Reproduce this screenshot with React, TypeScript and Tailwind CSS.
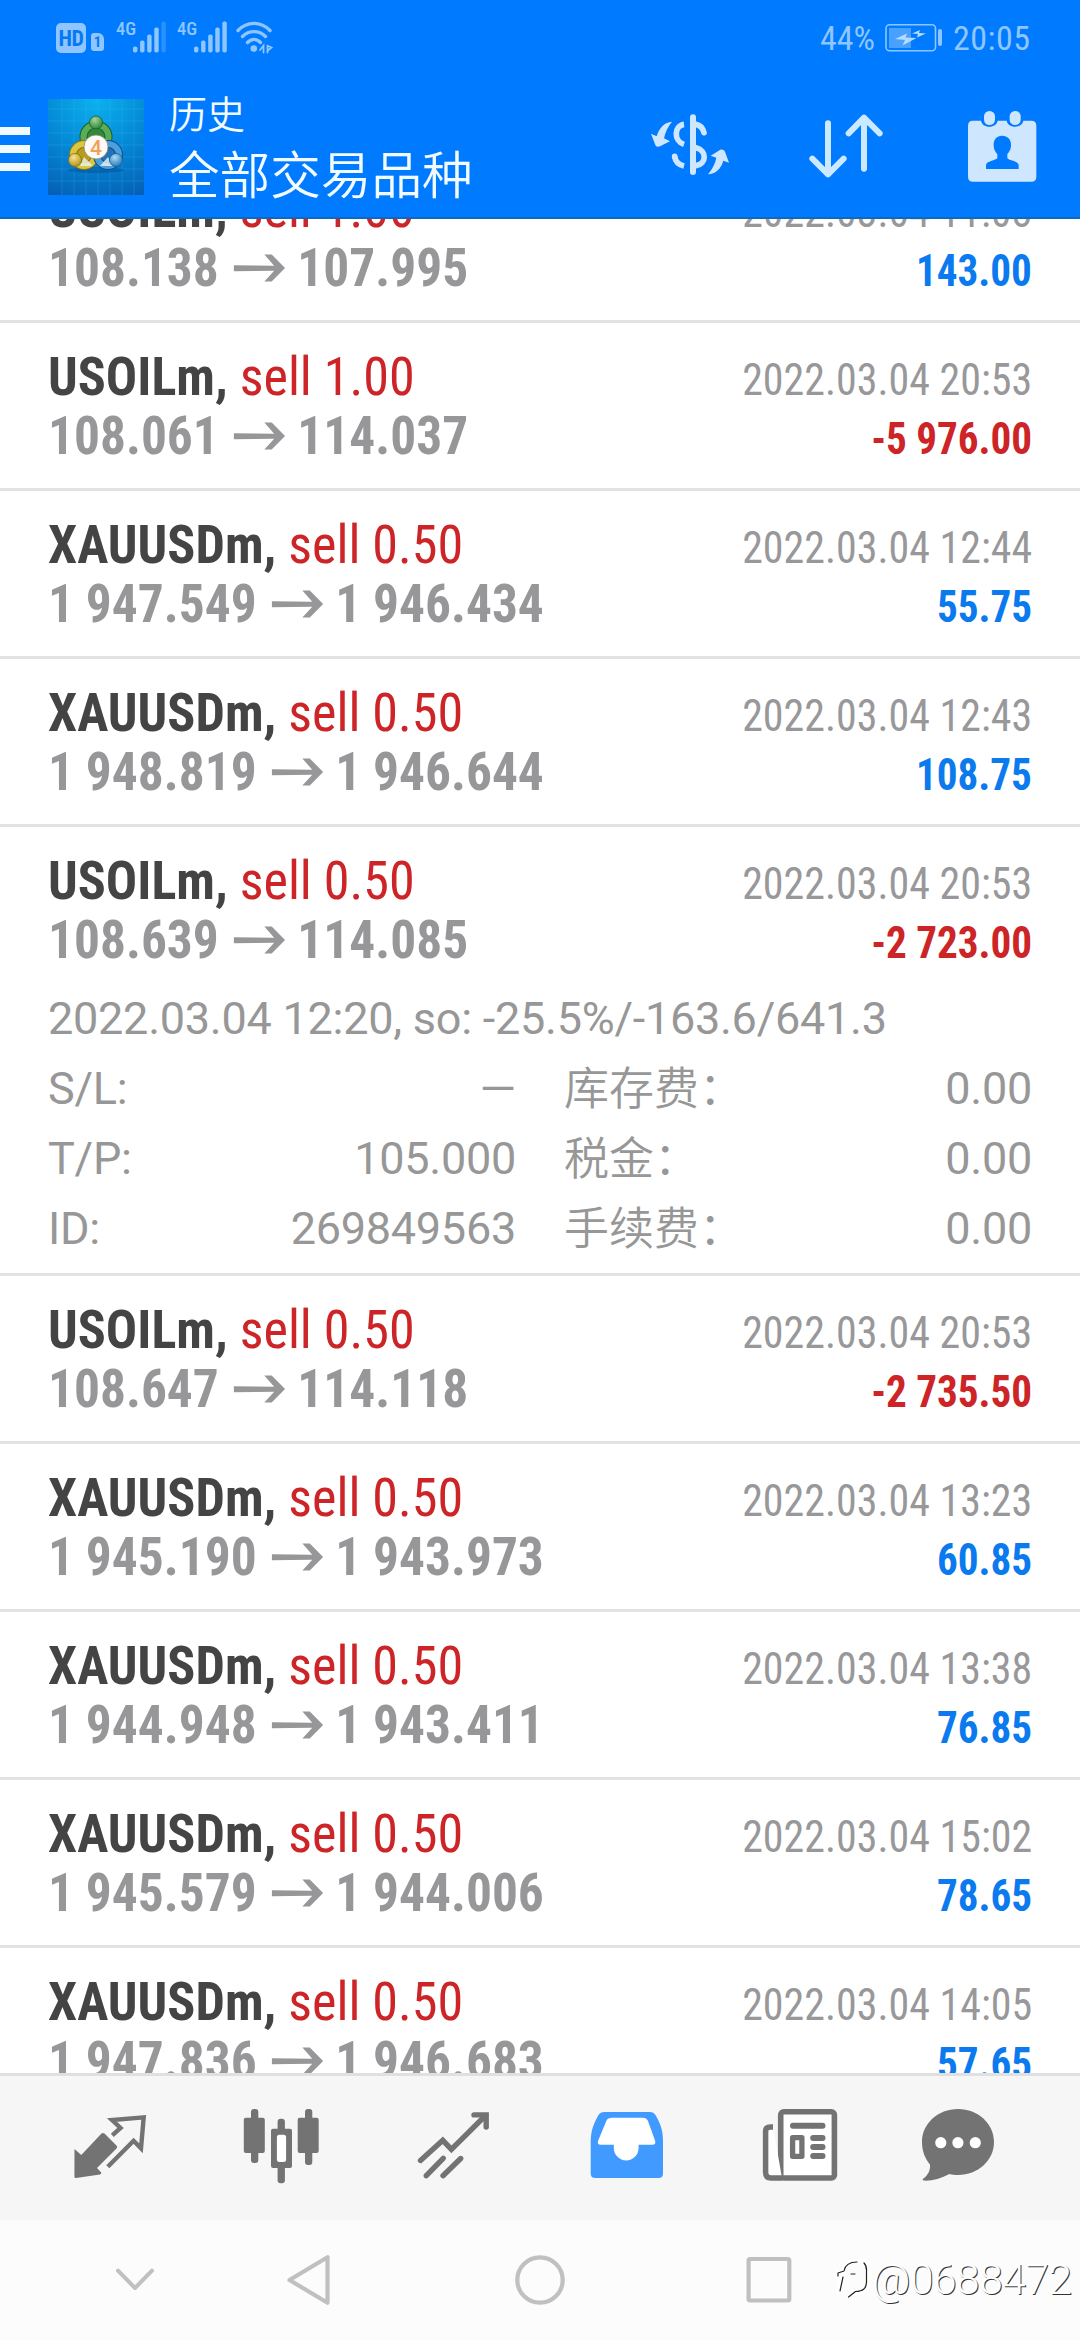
import clsx from "clsx";
import React from "react";

type Deal = {
  symbol: string;
  volume: string;
  open: string;
  close: string;
  time: string;
  profit: string;
  details?: boolean;
};

const deals: Deal[] = [
  { symbol: "USOILm", volume: "1.00", open: "108.138", close: "107.995", time: "2022.03.04 11:08", profit: "143.00" },
  { symbol: "USOILm", volume: "1.00", open: "108.061", close: "114.037", time: "2022.03.04 20:53", profit: "-5 976.00" },
  { symbol: "XAUUSDm", volume: "0.50", open: "1 947.549", close: "1 946.434", time: "2022.03.04 12:44", profit: "55.75" },
  { symbol: "XAUUSDm", volume: "0.50", open: "1 948.819", close: "1 946.644", time: "2022.03.04 12:43", profit: "108.75" },
  { symbol: "USOILm", volume: "0.50", open: "108.639", close: "114.085", time: "2022.03.04 20:53", profit: "-2 723.00", details: true },
  { symbol: "USOILm", volume: "0.50", open: "108.647", close: "114.118", time: "2022.03.04 20:53", profit: "-2 735.50" },
  { symbol: "XAUUSDm", volume: "0.50", open: "1 945.190", close: "1 943.973", time: "2022.03.04 13:23", profit: "60.85" },
  { symbol: "XAUUSDm", volume: "0.50", open: "1 944.948", close: "1 943.411", time: "2022.03.04 13:38", profit: "76.85" },
  { symbol: "XAUUSDm", volume: "0.50", open: "1 945.579", close: "1 944.006", time: "2022.03.04 15:02", profit: "78.65" },
  { symbol: "XAUUSDm", volume: "0.50", open: "1 947.836", close: "1 946.683", time: "2022.03.04 14:05", profit: "57.65" },
];

const details = [
  { left: "S/L:", leftValue: "—", right: "库存费：", rightValue: "0.00" },
  { left: "T/P:", leftValue: "105.000", right: "税金：", rightValue: "0.00" },
  { left: "ID:", leftValue: "269849563", right: "手续费：", rightValue: "0.00" },
];

function Signal({ bars }: { bars: number }) {
  return (
    <svg width="33" height="32" viewBox="0 0 33 32" fill="currentColor">
      {[6, 12, 18, 25, 31].map((h, i) => (
        <rect key={h} x={i * 7.1} y={31.5 - h} width="4.4" height={h} rx="1.8" opacity={i < bars ? 1 : 0.3} />
      ))}
    </svg>
  );
}

function StatusBar() {
  return (
    <div className="flex h-[72px] items-start pl-[56px] text-[#8fc6ff] font-['Roboto_Condensed',sans-serif]">
      <div className="mt-[23px] flex h-[30px] w-[30px] items-center justify-center rounded-[5px] bg-[#8fc6ff] text-[22px] font-bold tracking-tight text-[#0579f5]">
        HD
      </div>
      <div className="mt-[33px] ml-[5px] flex h-[18px] w-[13px] items-center justify-center rounded-[3px] rounded-tr-[6px] bg-[#8fc6ff] text-[15px] font-bold text-[#0579f5]">
        1
      </div>
      <span className="mt-[20px] ml-[12px] w-[17px] text-[18.5px] leading-[18px] font-medium">4G</span>
      <div className="mt-[21px]">
        <Signal bars={4} />
      </div>
      <span className="mt-[20px] ml-[11px] w-[17px] text-[18.5px] leading-[18px] font-medium">4G</span>
      <div className="mt-[21px]">
        <Signal bars={5} />
      </div>
      <svg className="mt-[21px] ml-[9px]" width="38" height="33" viewBox="0 0 38 33" fill="none" stroke="currentColor" strokeWidth="3.4" strokeLinecap="round">
        <path d="M2 9.5C11 0 25 0 34 9.5" />
        <path d="M6.5 15.5c6.5-6.5 16.5-6.5 23 0" />
        <path d="M11.5 21.5c4-4 9-4 13 0" />
        <circle cx="17.8" cy="27.5" r="3.3" fill="currentColor" stroke="none" />
        <path d="M27.5 31.5v-7l-3.5 4.5M31.5 24.5v7M32 25l3.5 1.5-3 2.5" strokeWidth="1.8" />
      </svg>
      <span className="mt-[17px] ml-[546px] w-[57px] text-[34px] leading-[42px] font-normal">44%</span>
      <svg className="mt-[24px] ml-[8px]" width="58" height="28" viewBox="0 0 58 28">
        <rect x="1" y="0.8" width="49.5" height="26" rx="3.5" fill="none" stroke="currentColor" strokeWidth="1.6" />
        <rect x="4" y="4" width="22" height="20" fill="currentColor" opacity="0.5" />
        <rect x="53" y="5" width="4" height="17" rx="2" fill="currentColor" />
        <path d="M10 15l12-5.5-1.5 4 11 .5-14 7.5 2.500-5.500zM27 9.500l8-3.500-1 3 7 .5-9 4 1-3.500z" fill="#b5daff" />
      </svg>
      <span className="mt-[17px] ml-[10px] text-[34px] leading-[42px] font-normal tracking-[0.5px]">20:05</span>
    </div>
  );
}

function AppLogo() {
  return (
    <svg width="96" height="96" viewBox="0 0 96 96">
      <defs>
        <radialGradient id="sky" cx="0.5" cy="0" r="1.1">
          <stop offset="0" stopColor="#0bb2ee" />
          <stop offset="0.5" stopColor="#0489d6" />
          <stop offset="1" stopColor="#0560b4" />
        </radialGradient>
        <radialGradient id="green" cx="0.4" cy="0.3" r="0.8">
          <stop offset="0" stopColor="#a5d695" />
          <stop offset="1" stopColor="#1f7a36" />
        </radialGradient>
        <radialGradient id="gold" cx="0.4" cy="0.3" r="0.8">
          <stop offset="0" stopColor="#f6e48c" />
          <stop offset="1" stopColor="#a98a12" />
        </radialGradient>
        <radialGradient id="blue" cx="0.4" cy="0.3" r="0.8">
          <stop offset="0" stopColor="#a9dcf8" />
          <stop offset="1" stopColor="#1b6cb0" />
        </radialGradient>
      </defs>
      <rect width="96" height="96" fill="url(#sky)" />
      <path d="M14 0v96M26 0v96M38 0v96M50 0v96M62 0v96M74 0v96M86 0v96M0 10h96M0 22h96M0 34h96M0 46h96M0 58h96M0 70h96M0 82h96" stroke="#4cc3f5" strokeWidth="0.7" opacity="0.3" />
      <ellipse cx="48" cy="71" rx="28" ry="3" fill="#043d78" opacity="0.35" />
      <circle cx="48" cy="38" r="12.5" fill="#2f8a3c" stroke="#17602a" strokeWidth="8" />
      <circle cx="48" cy="38" r="12.5" fill="none" stroke="#5cab57" strokeWidth="6" />
      <circle cx="36" cy="56" r="11" fill="#b89c1c" stroke="#8a7410" strokeWidth="8" />
      <circle cx="36" cy="56" r="11" fill="none" stroke="#dcc53f" strokeWidth="6" />
      <circle cx="60" cy="56" r="11" fill="#2273b8" stroke="#0d4b8c" strokeWidth="8" />
      <circle cx="60" cy="56" r="11" fill="none" stroke="#4a9fdc" strokeWidth="6" />
      <path d="M36 58l9 9h-13zM60 58l-8 9h13z" fill="#e9f4f2" opacity="0.8" />
      <circle cx="48" cy="23.5" r="6.5" fill="url(#green)" stroke="#175f28" strokeWidth="0.8" />
      <circle cx="27" cy="61" r="6.5" fill="url(#gold)" stroke="#857010" strokeWidth="0.8" />
      <circle cx="68" cy="61" r="6.5" fill="url(#blue)" stroke="#155a98" strokeWidth="0.8" />
      <circle cx="48" cy="48" r="12" fill="#fdfaf7" stroke="#8a8f6a" strokeWidth="0.8" />
      <text x="48" y="55.5" textAnchor="middle" fontFamily="Roboto, sans-serif" fontSize="21" fontWeight="500" fill="#f2a154">
        4
      </text>
    </svg>
  );
}

function AppBar() {
  return (
    <div className="flex h-[147px] items-start border-b-2 border-[#1068c0] text-[#cfe6ff]">
      <div className="mt-[55px] flex w-[30px] flex-col gap-[10px]">
        <div className="h-[8px] bg-[#f0faff]" />
        <div className="h-[8px] bg-[#f0faff]" />
        <div className="h-[8px] bg-[#f0faff]" />
      </div>
      <div className="mt-[27px] ml-[18px]">
        <AppLogo />
      </div>
      <div className="ml-[25px] w-[481px] text-[#f2fbff] font-['Noto_Sans_CJK_SC',sans-serif]">
        <div className="mt-[13px] h-[52px] text-[38px] leading-[53px] font-[350]">历史</div>
        <div className="h-[70px] text-[50.6px] leading-[70px] font-[350]">全部交易品种</div>
      </div>
      {/* currency */}
      <svg className="mt-[41px]" width="80" height="64" viewBox="150 340 240 192" fill="none" stroke="currentColor">
        <path d="M279 353V517" strokeWidth="18" strokeLinecap="round" />
        <path d="M252 374C222 378 220 424 252 434M224 470C226 486 236 495 252 499" strokeWidth="17" />
        <path d="M224 470v1M288 374c12 2 20 10 24 25M288 444c34 8 32 50 0 54" strokeWidth="17" strokeLinecap="round" />
        <path d="M216 366c-22 1-39 19-46 44l-17-8 14 36c3 4 8 4 13 2l30-15-18-9c4-18 12-36 24-50z" fill="currentColor" stroke="none" />
        <path d="M324 524c22-1 39-16 46-41l17 6-12-33c-3-6-9-8-14-6l-29 18 17 6c-4 20-13 36-25 50z" fill="currentColor" stroke="none" />
      </svg>
      {/* sort */}
      <svg className="mt-[41px] ml-[78px]" width="76" height="66" viewBox="624 340 228 198" fill="none" stroke="#cbeaff" strokeWidth="18" strokeLinecap="round" strokeLinejoin="round">
        <path d="M684 371V524M637 477l47 47 47-47" />
        <path d="M792 507V354M746 401l46-47 47 47" />
      </svg>
      {/* period */}
      <svg className="mt-[38px] ml-[83px]" width="71" height="73" viewBox="1100 330 213 219" fill="currentColor">
        <path d="M1118 362h24c2 11 12 18 25 18s23-7 25-18h27c2 11 12 18 25 18s23-7 25-18h24q15 0 15 15v153q0 15-15 15h-175q-15 0-15-15V377q0-15 15-15z" />
        <rect x="1151" y="333" width="33" height="42" rx="16" />
        <rect x="1228" y="333" width="33" height="42" rx="16" />
        <path d="M1205 407c17 0 27 11 27 27 0 14-5 21-11 28v12c4 8 34 8 34 22v11h-98v-11c0-14 30-14 34-22v-12c-6-7-11-14-11-28 0-16 9-27 25-27z" fill="#007aff" />
      </svg>
    </div>
  );
}

function Arrow() {
  return (
    <svg className="mr-[12.5px] ml-[16px] inline-block" width="54" height="28" viewBox="0 0 52 28" preserveAspectRatio="none" fill="#979799">
      <path d="M0 11.2L41 11.7L31 0.5H38.5L52 14L38.5 27.5H31L41 16.8L0 17.2z" />
    </svg>
  );
}

function DealRow({ deal }: { deal: Deal }) {
  return (
    <div className="border-b-[3px] border-[#e3e3e3] px-[48px] pt-[24px]">
      <div className="font-['Roboto_Condensed',sans-serif]">
        <div className="flex h-[59px] items-baseline justify-between leading-[59px]">
          <p className="origin-left scale-x-[0.965] text-[54px] text-[#cc2427]">
            <span className="font-bold text-[#444]">{deal.symbol},</span> sell {deal.volume}
          </p>
          <p className="origin-right scale-x-[0.932] text-[45px] text-[#98989a]">{deal.time}</p>
        </div>
        <div className="flex h-[59px] items-baseline justify-between leading-[59px]">
          <p className="flex origin-left scale-x-[0.952] items-center text-[54px] font-bold text-[#979799]">
            {deal.open}
            <Arrow />
            {deal.close}
          </p>
          <p
            className={clsx(
              "origin-right scale-x-[0.914] text-[45px] font-bold",
              deal.profit.startsWith("-") ? "text-[#cc2427]" : "text-[#0a7aee]"
            )}
          >
            {deal.profit}
          </p>
        </div>
      </div>
      {deal.details ? <DealDetails /> : <div className="h-[23px]" />}
    </div>
  );
}

function DealDetails() {
  return (
    <div className="pt-[15px] pb-[9px] text-[45px] leading-[70px] tracking-[-0.25px] text-[#979797] font-['Roboto','Noto_Sans_CJK_SC',sans-serif]">
      <p className="h-[70px]">2022.03.04 12:20, so: -25.5%/-163.6/641.3</p>
      {details.map((d) => (
        <div key={d.left} className="flex h-[70px] items-baseline">
          <div className="flex w-[468px] justify-between">
            <span>{d.left}</span>
            <span className={clsx(d.leftValue === "—" && "origin-right scale-x-[1.04]")}>{d.leftValue}</span>
          </div>
          <div className="ml-[48px] flex grow justify-between">
            <span className="translate-y-[1px] font-[350] tracking-normal">{d.right}</span>
            <span>{d.rightValue}</span>
          </div>
        </div>
      ))}
    </div>
  );
}

function TabBar() {
  return (
    <div className="flex h-[147px] items-start border-t-[3px] border-[#e0e0e0] bg-[#f6f6f6] pt-[30px] pl-[72px] text-[#737373]">
      {/* quotes */}
      <svg width="76" height="80" viewBox="72 46 76 80">
        <path d="M74.5 89L81.3 95L101.5 73.5Q103 72.3 104.5 73.5L116.5 85.5Q118 87 116.5 88.5L97 108L101.2 112.5Q101.5 114 100 114.5L76 118Q74.4 118 74.4 116.5z" fill="currentColor" />
        <path d="M112.3 75.3L120.5 68L112 60L143.7 57.3L141 88.3L133.6 80.8L107.8 106.7" fill="none" stroke="currentColor" strokeWidth="4.4" />
      </svg>
      {/* chart */}
      <svg className="ml-[95px]" width="76" height="80" viewBox="243 46 76 80" fill="currentColor">
        <rect x="251" y="49" width="7.3" height="54" rx="3" />
        <rect x="243.8" y="57.7" width="21" height="35.3" rx="2" />
        <rect x="277.6" y="58.7" width="7.3" height="64.5" rx="3" />
        <rect x="271" y="68.7" width="21" height="39.3" rx="2" />
        <rect x="276.9" y="74.7" width="9.2" height="27.3" rx="2.5" fill="#fff" />
        <rect x="305" y="49" width="7.3" height="56" rx="3" />
        <rect x="297.7" y="57.7" width="21" height="35.3" rx="2" />
      </svg>
      {/* trade */}
      <svg className="ml-[98px]" width="74" height="80" viewBox="417 46 74 80" fill="none" stroke="currentColor" strokeWidth="5.4" strokeLinecap="round">
        <path d="M420.5 100.5L442.8 80.3L451.4 89.3L485.5 55.5" strokeLinejoin="miter" />
        <path d="M474 54.9H486.2V67" />
        <path d="M426.3 115.7L443.2 98.3M443 115.7L460.7 98.5" />
      </svg>
      {/* history */}
      <svg className="ml-[99px]" width="74" height="80" viewBox="590 46 74 80">
        <path d="M604 52H650Q653.5 52 655.5 55C660.5 64 663 70 663 82V113.5Q663 118 658.5 118H595.2Q590.7 118 590.7 113.5V82C590.7 70 594 63 598.5 55Q600.5 52 604 52z" fill="#419aff" />
        <path d="M612 57.7H643.5Q646.5 57.7 647.8 60.5L655.2 81Q656 84.7 652.5 84.7H638.6V88A12.4 12.4 0 0 1 613.8 88V84.7H600.5Q597 84.7 598 81L606.5 60.5Q608 57.7 612 57.7z" fill="#fff" />
      </svg>
      {/* news */}
      <svg className="ml-[98px]" width="76" height="80" viewBox="762 46 76 80" fill="none" stroke="currentColor">
        <rect x="780.7" y="51.8" width="53.7" height="66.2" rx="3" strokeWidth="5.6" fill="#fff" />
        <path d="M773 67H770.5Q765.6 67 765.6 71V112Q765.6 118 771 118H782" strokeWidth="5.5" fill="#fff" />
        <path d="M793 65.8H822.5M813.2 78H822.5M813.2 87H822.5M813.2 96H822.5" strokeWidth="6" strokeLinecap="round" />
        <rect x="792.6" y="77.7" width="9.3" height="18.6" strokeWidth="5.3" strokeLinejoin="round" fill="#fff" />
      </svg>
      {/* messages */}
      <svg className="ml-[83px]" width="74" height="80" viewBox="921 46 74 80">
        <path d="M958 49C978 49 994 63.5 994 82S978 115 958 115C955 115 952 114.6 949.5 114C941 118.5 932 121 924 120.6Q921.5 120 923.5 118.5C928 115 930.5 110.5 930 104.5C925 98.5 922 91 922 82C922 63.5 938 49 958 49z" fill="currentColor" />
        <circle cx="940.8" cy="82.7" r="5.6" fill="#fff" />
        <circle cx="957.9" cy="82.7" r="5.6" fill="#fff" />
        <circle cx="975.3" cy="82.7" r="5.6" fill="#fff" />
      </svg>
    </div>
  );
}

function NavBar() {
  return (
    <div className="relative flex h-[120px] items-start bg-[#fcfcfc] pt-[30px] pl-[115px] text-[#c0c0c0]">
      <svg width="40" height="60" viewBox="115 190 40 60" fill="none" stroke="currentColor" strokeWidth="4" strokeLinecap="round" strokeLinejoin="round">
        <path d="M118 210.7L135 228L152 210.7" />
      </svg>
      <svg className="ml-[130px]" width="50" height="60" viewBox="285 190 50 60" fill="none" stroke="currentColor" strokeWidth="4.2" strokeLinejoin="round">
        <path d="M289.5 220L327.5 197.2V242.8z" />
      </svg>
      <svg className="ml-[175px]" width="60" height="60" viewBox="510 190 60 60" fill="none" stroke="currentColor" strokeWidth="4.2">
        <circle cx="540" cy="220" r="22.7" />
      </svg>
      <svg className="ml-[170px]" width="60" height="60" viewBox="740 190 60 60" fill="none" stroke="currentColor" strokeWidth="4.2">
        <rect x="748.6" y="199" width="40.7" height="41.5" rx="1.5" />
      </svg>
      {/* watermark */}
      <div className="absolute top-[36px] left-[834px] flex items-center">
        <svg width="38" height="48" viewBox="0 0 38 48" fill="none" strokeLinecap="round" strokeLinejoin="round">
          <path d="M4 35l3-15h-3v-4h5c1-8 6-11 13-11h9q4 0 4 5v17c0 7-5 10-12 10l-6 5" stroke="#fff" strokeWidth="4" />
          <path d="M6 35l3-14M4 20v-3l6-2C11 9 15 6 23 6M17 18h4M30 7q3 3 2.5 9v10c0 7-4 9-11 9.5l-7 5.5" stroke="#222" strokeWidth="1.2" />
        </svg>
        <span className="text-[42px] leading-[48px] font-light tracking-[-0.2px] text-white font-['Roboto',sans-serif] [text-shadow:1px_1px_0_#333]">
          @0688472
        </span>
      </div>
    </div>
  );
}

export default function App() {
  return (
    <div className="flex h-[2340px] w-[1080px] flex-col overflow-hidden bg-white">
      <header className="bg-[#007aff]">
        <StatusBar />
        <AppBar />
      </header>
      <main className="h-[1854px] overflow-hidden">
        <div className="-mt-[64px]">
          {deals.map((deal) => (
            <DealRow key={deal.open} deal={deal} />
          ))}
        </div>
      </main>
      <TabBar />
      <NavBar />
    </div>
  );
}
